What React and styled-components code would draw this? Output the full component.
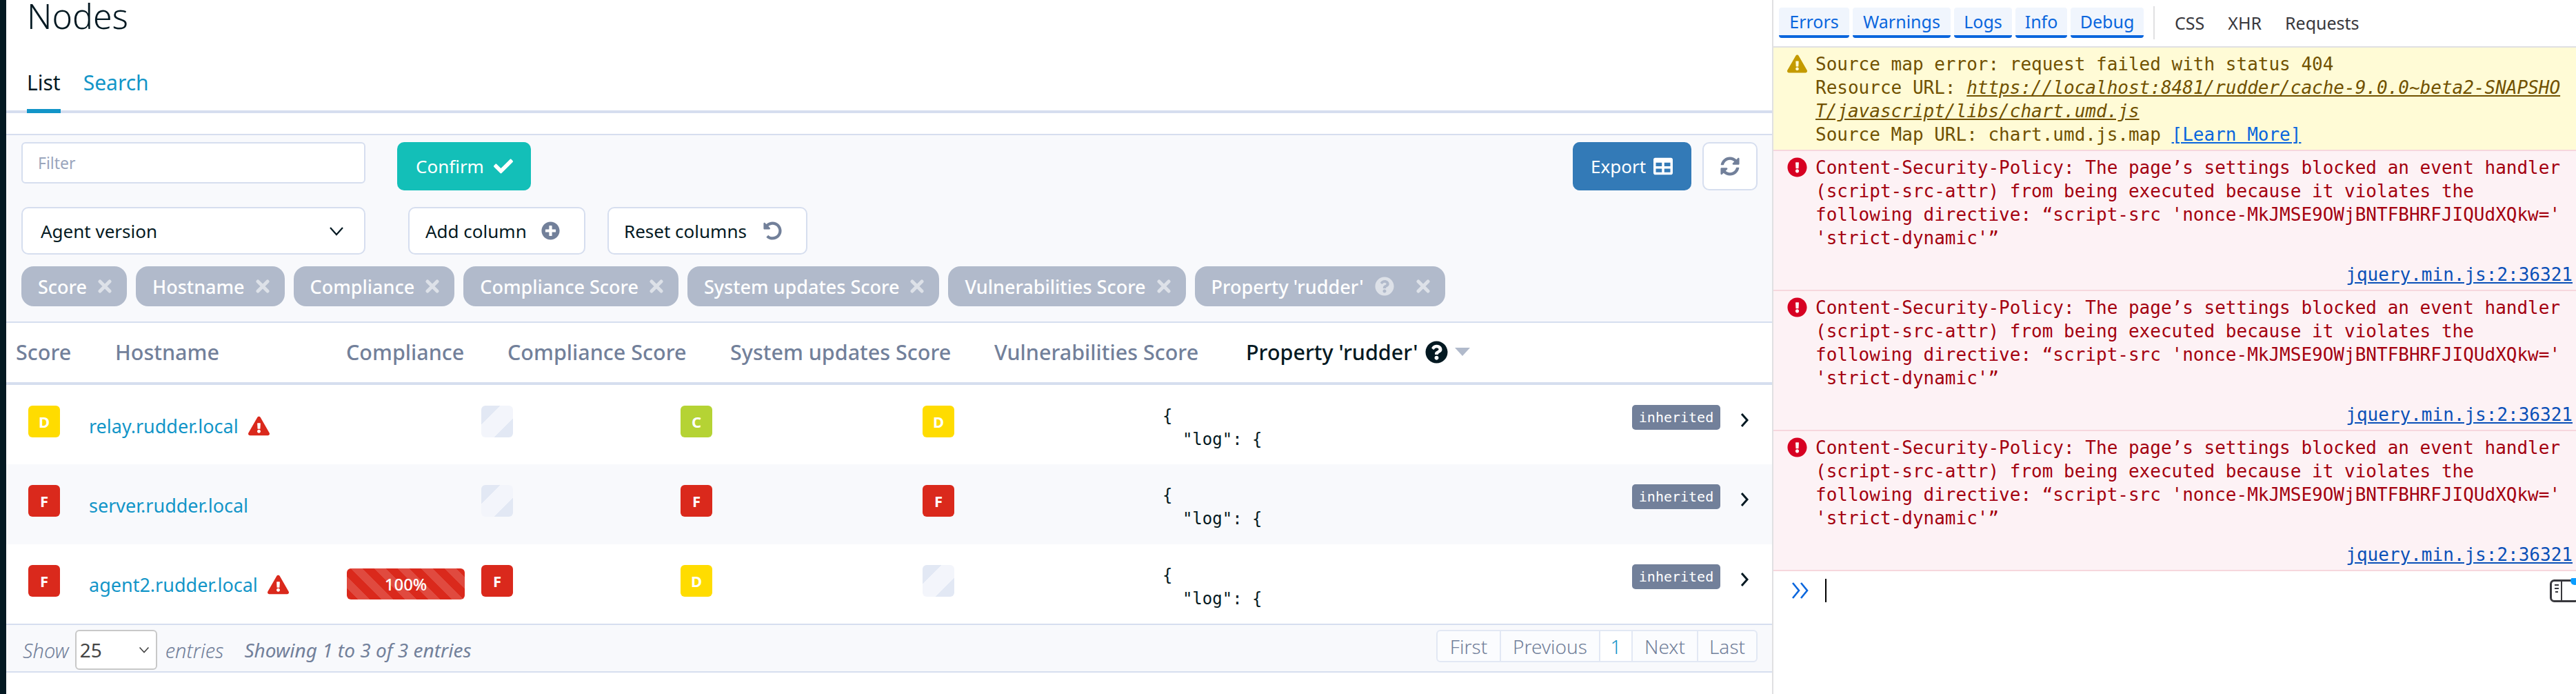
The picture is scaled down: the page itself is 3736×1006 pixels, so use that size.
import React from 'react';
import styled, { createGlobalStyle } from 'styled-components';
import {
  FaCheck,
  FaPlusCircle,
  FaUndoAlt,
  FaSyncAlt,
  FaTable,
  FaQuestionCircle,
  FaExclamationTriangle,
  FaExclamationCircle,
} from 'react-icons/fa';

const GlobalStyle = createGlobalStyle`
  html, body {
    margin: 0;
    padding: 0;
    background: #fff;
  }
  * {
    box-sizing: border-box;
  }
`;

const Page = styled.div`
  display: flex;
  width: 3736px;
  height: 1006px;
  overflow: hidden;
  font-family: 'Noto Sans', sans-serif;
  color: #041922;
`;

const Rail = styled.div`
  width: 9px;
  background: #041922;
`;

const Main = styled.main`
  width: 2561px;
  display: flex;
  flex-direction: column;
`;

const Title = styled.h1`
  margin: 0;
  padding: 0 0 0 30px;
  height: 94px;
  font-size: 50px;
  line-height: 46px;
  font-weight: 300;
`;

const Tabs = styled.div`
  display: flex;
  gap: 33px;
  height: 70px;
  padding-left: 30px;
  border-bottom: 4px solid #d6deef;
`;

const Tab = styled.a`
  height: 70px;
  font-size: 30px;
  line-height: 44px;
  padding-top: 4px;
  color: ${({ $active }) => ($active ? '#041922' : '#1295c8')};
  border-bottom: ${({ $active }) => ($active ? '6px solid #1295c8' : 'none')};
`;

const Filters = styled.section`
  margin-top: 30px;
  height: 274px;
  padding: 10px 21px 0 22px;
  background: #f8f9fc;
  border-top: 2px solid #d6deef;
  border-bottom: 2px solid #d6deef;
`;

const FilterRow = styled.div`
  display: flex;
  align-items: flex-start;
  height: 94px;
`;

const Input = styled.input`
  width: 499px;
  height: 60px;
  padding: 0 22px;
  font: 400 23px 'Noto Sans', sans-serif;
  background: #fff;
  border: 2px solid #d6deef;
  border-radius: 6px;
  &::placeholder {
    color: #9aa5bc;
  }
`;

const Button = styled.button`
  display: flex;
  align-items: center;
  justify-content: ${({ $pl }) => ($pl ? 'flex-start' : 'center')};
  gap: ${({ $gap }) => $gap || 14}px;
  height: 70px;
  width: ${({ $w }) => $w}px;
  margin-left: ${({ $ml }) => $ml || 0}px;
  padding: 0 0 0 ${({ $pl }) => $pl || 0}px;
  font: 400 26px 'Noto Sans', sans-serif;
  border-radius: 10px;
  color: ${({ $fg }) => $fg || '#fff'};
  background: ${({ $bg }) => $bg || '#fff'};
  border: ${({ $bg }) => ($bg ? 'none' : '2px solid #d6deef')};
`;

const Spacer = styled.div`
  flex: 1;
`;

const SelectBox = styled.div`
  display: flex;
  align-items: center;
  justify-content: space-between;
  width: 499px;
  height: 69px;
  padding: 0 29px 0 26px;
  font-size: 26px;
  background: #fff;
  border: 2px solid #d6deef;
  border-radius: 10px;
`;

const SecondaryButton = styled(Button)`
  height: 69px;
  color: #041922;
`;

const Chips = styled.div`
  display: flex;
  gap: 13px;
  margin-top: -8px;
`;

const Chip = styled.span`
  display: flex;
  align-items: center;
  gap: 16px;
  height: 58px;
  padding: 0 22px 0 24px;
  font-size: 27px;
  font-weight: 500;
  white-space: nowrap;
  color: #fff;
  background: #b1bacb;
  border-radius: 18px;
  svg {
    color: #dde1e8;
  }
`;

const ChipClose = styled.svg`
  width: 20px;
  height: 20px;
  margin-left: ${({ $ml }) => $ml || 0}px;
`;

const HeaderRow = styled.div`
  display: grid;
  grid-template-columns: 144px 335px 234px 323px 383px 365px 1fr;
  align-items: center;
  height: 90px;
  padding: 0 0 2px 14px;
  border-bottom: 4px solid #d6deef;
`;

const HeaderCell = styled.div`
  display: flex;
  align-items: center;
  gap: 10px;
  font-size: 30.5px;
  font-weight: 500;
  white-space: nowrap;
  color: ${({ $active }) => ($active ? '#041922' : '#72809a')};
`;

const SortArrow = styled.span`
  width: 0;
  height: 0;
  border-left: 11px solid transparent;
  border-right: 11px solid transparent;
  border-top: 12px solid #b1bacb;
`;

const Row = styled.div`
  display: grid;
  grid-template-columns: 88px 374px 195px 289px 351px 348px 1fr;
  height: 115.33px;
  padding-left: 32px;
  background: ${({ $odd }) => ($odd ? '#f8f9fc' : '#fff')};
`;

const badgeBg = {
  D: '#ffdc00',
  C: '#b5d334',
  F: '#da291c',
};

const Badge = styled.span`
  display: flex;
  align-items: center;
  justify-content: center;
  width: 46px;
  height: 46px;
  margin-top: 30px;
  font-size: 22px;
  font-weight: 700;
  color: #fff;
  border-radius: 6px;
  background: ${({ $grade }) =>
    badgeBg[$grade] || 'linear-gradient(135deg, #e2e8f4 0 30%, #f3f5fb 30% 70%, #e2e8f4 70%)'};
`;

const HostCell = styled.div`
  display: flex;
  align-items: center;
  gap: 14px;
  padding-top: 3px;
`;

const HostLink = styled.a`
  font-size: 27px;
  color: #1295c8;
`;

const ProgressCell = styled.div`
  display: flex;
  align-items: center;
`;

const Progress = styled.div`
  display: flex;
  align-items: center;
  justify-content: center;
  width: 171px;
  height: 45px;
  font-size: 24px;
  font-weight: 500;
  color: #fff;
  border-radius: 6px;
  background: repeating-linear-gradient(45deg, #da291c 0 12px, #e04a3f 12px 24px);
`;

const PropertyCell = styled.div`
  display: flex;
  justify-content: space-between;
  padding: 29px 33px 0 0;
`;

const Json = styled.pre`
  margin: -1px 0 0;
  font: 400 24px/34px 'DejaVu Sans Mono', monospace;
  color: #041922;
`;

const PropertyEnd = styled.div`
  display: flex;
  align-items: flex-start;
  gap: 28px;
`;

const Inherited = styled.span`
  display: flex;
  align-items: center;
  justify-content: center;
  width: 128px;
  height: 36px;
  font: 400 20px 'DejaVu Sans Mono', monospace;
  color: #fff;
  background: #72809a;
  border-radius: 5px;
`;

const Expand = styled.svg`
  width: 14px;
  height: 20px;
  margin-top: 12px;
`;

const Footer = styled.div`
  display: flex;
  align-items: center;
  height: 71px;
  padding: 6px 21px 0 24px;
  font-size: 28px;
  color: #72809a;
  background: #f8f9fc;
  border-top: 2px solid #d6deef;
  border-bottom: 2px solid #d6deef;
`;

const Faint = styled.span`
  font-size: 29px;
  font-style: italic;
  font-weight: 300;
`;

const Info = styled.span`
  margin-left: 30px;
  font-style: italic;
`;

const PageLength = styled.div`
  display: flex;
  align-items: center;
  justify-content: space-between;
  width: 119px;
  height: 58px;
  margin: 0 12px 0 9px;
  padding: 0 9px 0 5px;
  color: #444;
  background: #fff;
  border: 2px solid #c8c8c8;
  border-radius: 6px;
`;

const Pager = styled.div`
  display: flex;
  height: 47px;
  margin-bottom: 11px;
  background: #fbfcfe;
  border: 2px solid #e2e8f4;
  border-radius: 6px;
`;

const PagerItem = styled.span`
  display: flex;
  align-items: center;
  justify-content: center;
  width: ${({ $w }) => $w}px;
  font-size: 28px;
  font-weight: 300;
  color: ${({ $current }) => ($current ? '#1295c8' : '#72809a')};
  background: ${({ $current }) => ($current ? '#fff' : 'transparent')};
  border-left: ${({ $first }) => ($first ? 'none' : '2px solid #e2e8f4')};
`;

const Console = styled.aside`
  flex: 1;
  min-width: 0;
  display: flex;
  flex-direction: column;
  border-left: 2px solid #e0e0e2;
`;

const ConsoleBar = styled.div`
  display: flex;
  align-items: center;
  height: 69px;
  padding: 0 0 2px 8px;
  font-size: 25px;
  border-bottom: 2px solid #e0e0e2;
`;

const LevelButton = styled.span`
  display: flex;
  align-items: center;
  justify-content: center;
  width: ${({ $w }) => $w}px;
  height: 44px;
  margin-right: 5px;
  color: #0a66dd;
  background: #f0f5fd;
  border-bottom: 4px solid #0a66dd;
  border-radius: 4px;
`;

const BarDivider = styled.span`
  width: 2px;
  height: 48px;
  margin: 0 29px 0 9px;
  background: #e0e0e2;
`;

const NetButton = styled.span`
  margin-right: 34px;
  color: #38383d;
`;

const Message = styled.div`
  display: flex;
  gap: 12px;
  padding: 7px 5px 5px 20px;
  font: 400 26px/34px 'DejaVu Sans Mono', monospace;
  color: ${({ $warning }) => ($warning ? '#715100' : '#a4000f')};
  background: ${({ $warning }) => ($warning ? '#fffbd6' : '#fdf2f5')};
  border-bottom: 2px solid #f6d7dd;
  svg {
    flex: none;
    margin-top: 2px;
    color: ${({ $warning }) => ($warning ? '#c49a00' : '#d70022')};
  }
`;

const MessageBody = styled.div`
  flex: 1;
  min-width: 0;
`;

const Line = styled.div``;

const ResourceLink = styled.a`
  font-style: italic;
  text-decoration: underline;
  word-break: break-all;
`;

const LearnMore = styled.a`
  color: #0a66dd;
  text-decoration: underline;
`;

const Location = styled.div`
  margin-top: 19px;
  text-align: right;
  a {
    color: #0a50b8;
    text-decoration: underline;
  }
`;

const Prompt = styled.div`
  display: flex;
  align-items: center;
  height: 56px;
  padding-left: 25px;
`;

const Caret = styled.span`
  width: 2px;
  height: 34px;
  margin-left: 22px;
  background: #000;
`;

const ToggleWrap = styled.span`
  margin-left: auto;
  display: flex;
`;

const columns = [
  'Score',
  'Hostname',
  'Compliance',
  'Compliance Score',
  'System updates Score',
  'Vulnerabilities Score',
];

const nodes = [
  { score: 'D', host: 'relay.rudder.local', warn: true, compliance: '', system: 'C', vuln: 'D' },
  { score: 'F', host: 'server.rudder.local', warn: false, compliance: '', system: 'F', vuln: 'F' },
  { score: 'F', host: 'agent2.rudder.local', warn: true, compliance: 'F', system: 'D', vuln: '', bar: '100%' },
];

const pages = [
  { label: 'First', w: 90 },
  { label: 'Previous', w: 144 },
  { label: '1', w: 47, current: true },
  { label: 'Next', w: 95 },
  { label: 'Last', w: 86 },
];

const Chevron = ({ w = 22, h = 14, color = '#041922' }) => (
  <svg width={w} height={h} viewBox="0 0 22 14" fill="none" stroke={color} strokeWidth="2.2">
    <path d="M2 2l9 10 9-10" />
  </svg>
);

const CloseIcon = ({ ml }) => (
  <ChipClose $ml={ml} viewBox="0 0 20 20" fill="none" stroke="#dde1e8" strokeWidth="5" strokeLinecap="round">
    <path d="M3 3l14 14M17 3L3 17" />
  </ChipClose>
);

const CspMessage = () => (
  <Message>
    <FaExclamationCircle size={29} />
    <MessageBody>
      Content-Security-Policy: The page’s settings blocked an event handler (script-src-attr) from
      being executed because it violates the following directive: “script-src
      'nonce-MkJMSE9OWjBNTFBHRFJIQUdXQkw=' 'strict-dynamic'”
      <Location>
        <a href="#jquery">jquery.min.js:2:36321</a>
      </Location>
    </MessageBody>
  </Message>
);

const App = () => {
  return (
    <Page>
      <GlobalStyle />
      <Rail />
      <Main>
        <Title>Nodes</Title>
        <Tabs>
          <Tab $active>List</Tab>
          <Tab>Search</Tab>
        </Tabs>
        <Filters>
          <FilterRow>
            <Input placeholder="Filter" />
            <Button $bg="#13bfb8" $w={194} $ml={46} $pl={27}>
              Confirm <FaCheck size={28} />
            </Button>
            <Spacer />
            <Button $bg="#337ab7" $w={172} $gap={11} $pl={26}>
              Export <FaTable size={28} />
            </Button>
            <Button $w={80} $ml={16} $fg="#72809a">
              <FaSyncAlt size={28} />
            </Button>
          </FilterRow>
          <FilterRow>
            <SelectBox>
              Agent version <Chevron />
            </SelectBox>
            <SecondaryButton $w={257} $ml={62} $gap={21} $pl={23}>
              Add column <FaPlusCircle size={27} color="#72809a" />
            </SecondaryButton>
            <SecondaryButton $w={290} $ml={32} $gap={24} $pl={22}>
              Reset columns <FaUndoAlt size={27} color="#72809a" />
            </SecondaryButton>
          </FilterRow>
          <Chips>
            {columns.map((label) => (
              <Chip key={label}>
                {label} <CloseIcon />
              </Chip>
            ))}
            <Chip>
              Property 'rudder' <FaQuestionCircle size={28} /> <CloseIcon ml={16} />
            </Chip>
          </Chips>
        </Filters>
        <HeaderRow>
          {columns.map((label) => (
            <HeaderCell key={label}>{label}</HeaderCell>
          ))}
          <HeaderCell $active>
            Property 'rudder' <FaQuestionCircle size={33} /> <SortArrow />
          </HeaderCell>
        </HeaderRow>
        {nodes.map((node, i) => (
          <Row key={node.host} $odd={i === 1}>
            <Badge $grade={node.score}>{node.score}</Badge>
            <HostCell>
              <HostLink>{node.host}</HostLink>
              {node.warn && <FaExclamationTriangle size={31} color="#da291c" />}
            </HostCell>
            <ProgressCell>{node.bar && <Progress>{node.bar}</Progress>}</ProgressCell>
            <Badge $grade={node.compliance}>{node.compliance}</Badge>
            <Badge $grade={node.system}>{node.system}</Badge>
            <Badge $grade={node.vuln}>{node.vuln}</Badge>
            <PropertyCell>
              <Json>{'{\n  "log": {'}</Json>
              <PropertyEnd>
                <Inherited>inherited</Inherited>
                <Expand viewBox="0 0 14 20" fill="none" stroke="#041922" strokeWidth="3">
                  <path d="M3 1l8 9-8 9" />
                </Expand>
              </PropertyEnd>
            </PropertyCell>
          </Row>
        ))}
        <Footer>
          <Faint>Show</Faint>
          <PageLength>
            25 <Chevron w={16} h={10} color="#444" />
          </PageLength>
          <Faint>entries</Faint>
          <Info>Showing 1 to 3 of 3 entries</Info>
          <Spacer />
          <Pager>
            {pages.map((p, i) => (
              <PagerItem key={p.label} $w={p.w} $current={p.current} $first={i === 0}>
                {p.label}
              </PagerItem>
            ))}
          </Pager>
        </Footer>
      </Main>
      <Console>
        <ConsoleBar>
          <LevelButton $w={102}>Errors</LevelButton>
          <LevelButton $w={142}>Warnings</LevelButton>
          <LevelButton $w={84}>Logs</LevelButton>
          <LevelButton $w={75}>Info</LevelButton>
          <LevelButton $w={106}>Debug</LevelButton>
          <BarDivider />
          <NetButton>CSS</NetButton>
          <NetButton>XHR</NetButton>
          <NetButton>Requests</NetButton>
        </ConsoleBar>
        <Message $warning>
          <FaExclamationTriangle size={29} />
          <MessageBody>
            <Line>Source map error: request failed with status 404</Line>
            <Line>
              Resource URL:{' '}
              <ResourceLink>
                https://localhost:8481/rudder/cache-9.0.0~beta2-SNAPSHOT/javascript/libs/chart.umd.js
              </ResourceLink>
            </Line>
            <Line>
              Source Map URL: chart.umd.js.map <LearnMore>[Learn More]</LearnMore>
            </Line>
          </MessageBody>
        </Message>
        <CspMessage />
        <CspMessage />
        <CspMessage />
        <Prompt>
          <svg width="28" height="26" viewBox="0 0 28 26" fill="none" stroke="#0a66dd" strokeWidth="2.6">
            <path d="M3 2l9 11-9 11M15 2l9 11-9 11" />
          </svg>
          <Caret />
          <ToggleWrap>
            <svg width="38" height="36" viewBox="0 0 38 36" fill="none">
              <rect x="1.5" y="3.5" width="40" height="30" rx="5" stroke="#38383d" strokeWidth="3" />
              <path d="M17 4v29" stroke="#38383d" strokeWidth="2" />
              <path d="M7 10h6M7 15h6M8 20h4" stroke="#38383d" strokeWidth="2" />
              <circle cx="36" cy="4" r="6" fill="#0a9dff" />
            </svg>
          </ToggleWrap>
        </Prompt>
      </Console>
    </Page>
  );
};

export default App;
